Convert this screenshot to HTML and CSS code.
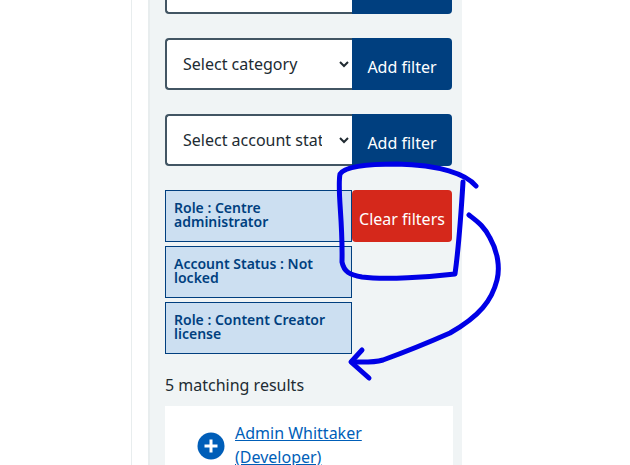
FILE: index.html
```html
<!DOCTYPE html>
<html lang="en">
<head>
  <meta charset="UTF-8" />
  <meta name="viewport" content="width=device-width, initial-scale=1.0"/>
  <title>Filters</title>
  <link rel="stylesheet" href="styles.css">
</head>
<body>
  <div class="page">
    <div class="panel">
      <div class="filter-group">
        <select class="filter-select"><option>Select role</option></select>
        <button class="btn-add">Add filter</button>
      </div>
      <div class="filter-group">
        <select class="filter-select"><option>Select category</option></select>
        <button class="btn-add">Add filter</button>
      </div>
      <div class="filter-group">
        <select class="filter-select"><option>Select account status</option></select>
        <button class="btn-add">Add filter</button>
      </div>

      <div class="applied">
        <div class="tags">
          <div class="tag">Role : Centre administrator</div>
          <div class="tag">Account Status : Not locked</div>
          <div class="tag">Role : Content Creator license</div>
        </div>
        <button class="btn-clear">Clear filters</button>
      </div>

      <p class="count">5 matching results</p>

      <div class="result">
        <svg class="expand" viewBox="0 0 28 28">
          <circle cx="14" cy="14" r="13.5" fill="#005eb8"/>
          <path d="M14 7.5v13M7.5 14h13" stroke="#fff" stroke-width="3"/>
        </svg>
        <a class="result-link" href="#">Admin Whittaker (Developer)</a>
      </div>
    </div>
  </div>

  <svg class="scribble" viewBox="0 0 630 465">
    <path d="M476 186C466 174 440 165 397 164C370 164 345 166 340 174C337 190 343 220 342 262C344 272 350 275 362 277C385 280 430 277 455 274C459 245 461 215 463 182"/>
    <path d="M469 215C478 222 484 226 490 238C498 252 500 268 497 280C492 300 480 316 450 333C425 344 405 352 383 360C372 363 362 362 352 362"/>
    <path d="M362 350L351 362L369 378"/>
  </svg>
</body>
</html>
```

FILE: styles.css
```css
html, body {
  margin: 0;
  height: 465px;
  overflow: hidden;
  background: #fff;
}

body {
  font-family: "Noto Sans", "Open Sans", sans-serif;
  color: #212b32;
}

.page {
  width: 330px;
  margin-left: 131px;
  padding-left: 16px;
  border-left: 1px solid #e8edee;
  height: 465px;
  overflow: hidden;
}

.panel {
  width: 297px;
  height: 503px;
  margin-top: -38px;
  padding-left: 15px;
  background: #f0f4f5;
  border-left: 2px solid #e8edee;
}

.filter-group {
  display: flex;
  width: 287px;
  height: 52px;
  margin-bottom: 24px;
}

.filter-select {
  width: 187px;
  height: 52px;
  padding: 0 14px 0 12px;
  border: 2px solid #425563;
  border-right: none;
  border-radius: 4px 0 0 4px;
  background: #fff;
  font: 16px "Noto Sans", sans-serif;
  color: #212b32;
}

.btn-add {
  width: 100px;
  height: 52px;
  padding: 6px 0 0;
  border: none;
  border-radius: 0 4px 4px 0;
  background: #003f7f;
  color: #fff;
  font: 16px "Noto Sans", sans-serif;
}

.applied {
  display: flex;
  align-items: flex-start;
}

.tags {
  display: flex;
  flex-direction: column;
  gap: 4px;
}

.tag {
  width: 187px;
  height: 52px;
  box-sizing: border-box;
  padding: 10px 8px 0;
  border: 1px solid #003f7f;
  background: #ccdff1;
  color: #003f7f;
  font-size: 14px;
  font-weight: 600;
  line-height: 14px;
}

.btn-clear {
  width: 100px;
  height: 52px;
  padding: 6px 0 0;
  border: none;
  border-radius: 4px;
  background: #d5281b;
  color: #fff;
  font: 16px "Noto Sans", sans-serif;
}

.count {
  margin: 20px 0 10px;
  font-size: 16px;
  line-height: 22px;
}

.result {
  display: flex;
  align-items: center;
  gap: 10px;
  width: 288px;
  height: 80px;
  box-sizing: border-box;
  padding: 15px 20px 17px 32px;
  background: #fff;
}

.expand {
  flex: none;
  width: 28px;
  height: 28px;
  margin-top: 2px;
}

.result-link {
  color: #005eb8;
  font-size: 16px;
  line-height: 24px;
}

.scribble {
  position: absolute;
  left: 0;
  top: 0;
  width: 630px;
  height: 465px;
  fill: none;
  stroke: #0000e6;
  stroke-width: 5;
  stroke-linecap: round;
  stroke-linejoin: round;
}
```
